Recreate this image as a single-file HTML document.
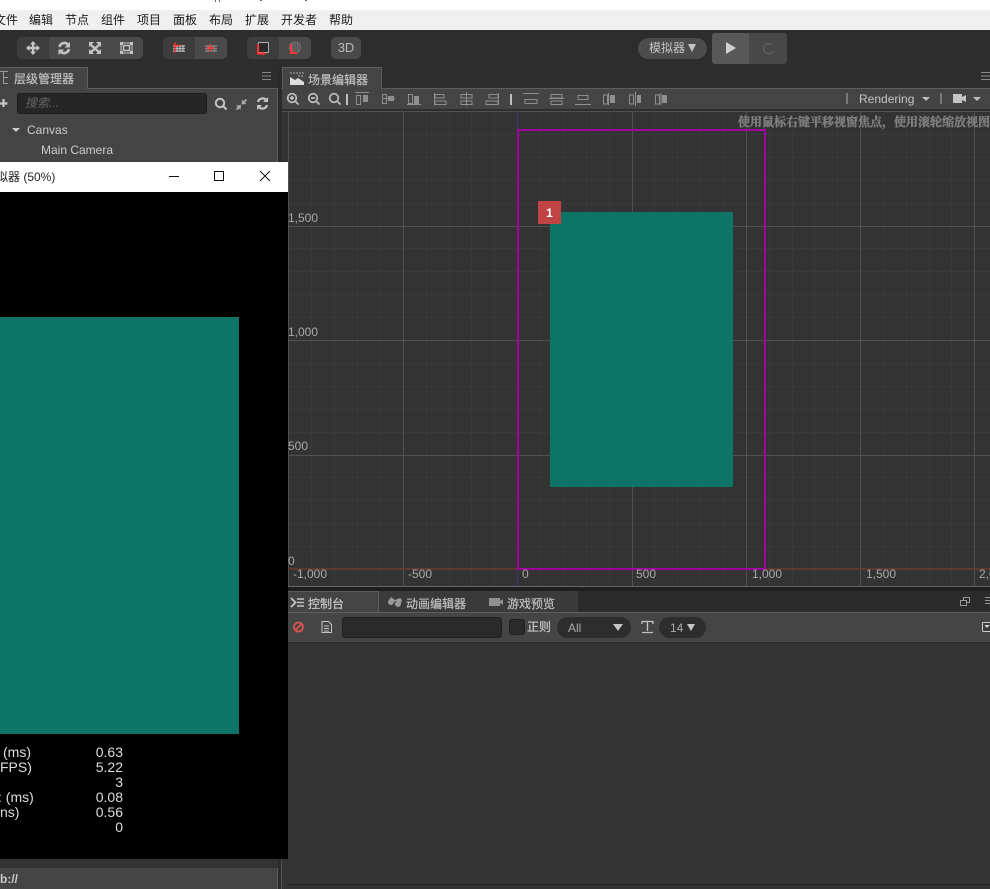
<!DOCTYPE html>
<html><head><meta charset="utf-8">
<style>
html,body{margin:0;padding:0;background:#2d2d2d}
#r{position:relative;width:990px;height:889px;overflow:hidden;background:#2d2d2d;font-family:"Liberation Sans","Noto Sans CJK SC",sans-serif;font-size:12px;color:#ccc}
.a{position:absolute}
.t{position:absolute;white-space:nowrap;line-height:16px}
.b{-webkit-text-stroke:.25px currentColor}
svg{position:absolute;overflow:visible}
.m{position:absolute;top:12px;color:#1a1a1a;font-size:12px;line-height:16px;white-space:nowrap}
.g{fill:none;stroke:#8f8f8f;stroke-width:1}
.f{fill:#8f8f8f}
</style></head><body><div id="r">
<div class="a" style="left:0;top:0;width:990px;height:10px;background:#fff"></div>
<svg style="left:0;top:0" width="400" height="4"><path d="M215 0h1v2h-1zM219 0h1v2h-1zM260 0h2v1h-2zM305 0h2v1h-2z" fill="#666"/></svg>
<div class="a" style="left:0;top:10px;width:990px;height:20px;background:#f0f0f0"></div>
<div class="m" style="left:-6px">文件</div><div class="m" style="left:29px">编辑</div><div class="m" style="left:65px">节点</div><div class="m" style="left:101px">组件</div><div class="m" style="left:137px">项目</div><div class="m" style="left:173px">面板</div><div class="m" style="left:209px">布局</div><div class="m" style="left:245px">扩展</div><div class="m" style="left:281px">开发者</div><div class="m" style="left:329px">帮助</div>

<!-- toolbar -->
<div class="a" style="left:17px;top:37px;width:126px;height:22px;border-radius:5px;background:#4a4a4a;overflow:hidden"><div class="a" style="left:0;top:0;width:32px;height:22px;background:#3d3d3d"></div></div>
<div class="a" style="left:163px;top:37px;width:64px;height:22px;border-radius:5px;background:#4a4a4a;overflow:hidden"><div class="a" style="left:0;top:0;width:32px;height:22px;background:#3d3d3d"></div></div>
<div class="a" style="left:247px;top:37px;width:64px;height:22px;border-radius:5px;background:#4a4a4a;overflow:hidden"><div class="a" style="left:0;top:0;width:32px;height:22px;background:#3d3d3d"></div></div>
<div class="a" style="left:331px;top:37px;width:30px;height:22px;border-radius:5px;background:#4a4a4a;text-align:center;line-height:22px;color:#bbb;font-size:13px">3D</div>
<svg style="left:0;top:0" width="400" height="64">
 <g fill="none" stroke="#c4c4c4" stroke-width="2">
  <path d="M33 42V54M27 48H39" stroke-width="2.400"/><path d="M33 41l-3 3.500h6zM33 55l-3-3.500h6zM26 48l3.500-3v6zM40 48l-3.500-3v6z" fill="#c4c4c4" stroke="none"/>
  <path d="M59.500 47a5 5 0 0 1 8.500-2.500M69 49a5 5 0 0 1-8.500 2.500" stroke-width="2.600"/>
  <path d="M70 42v5.500h-5.500zM58.500 55v-5.500H64z" fill="#c4c4c4" stroke="none"/>
  <path d="M91 45l8 7M99 45l-8 7" stroke-width="2.400"/>
  <path d="M89 42h5l-5 5zM101 42h-5l5 5zM89 54h5l-5-5zM101 54h-5l5-5z" fill="#c4c4c4" stroke="none"/>
  <rect x="121" y="43" width="11" height="10" stroke-width="1"/><rect x="123.500" y="45.500" width="6" height="5" stroke-width="1.500"/>
  <path d="M120 42h3v3h-3zM130 42h3v3h-3zM120 51h3v3h-3zM130 51h3v3h-3z" fill="#c4c4c4" stroke="none"/>
 </g>
 <g stroke="#b5b5b5" stroke-width="1.200" fill="none"><path d="M173 46h12M173 48.500h12M173 51h12M177 45v7M180 45v7M183 45v7"/></g>
 <path d="M175 42.500v10M174 45.500h6" stroke="#f33" stroke-width="1.500" fill="none"/>
 <g stroke="#888" stroke-width="1.200" fill="none"><path d="M205 46h12M205 48.500h12M205 51h12M208 45v7M211 45v7M214 45v7"/></g>
 <path d="M210.500 44v8M207 48h7" stroke="#f33" stroke-width="1.500" fill="none"/>
 <rect x="258.500" y="42.500" width="10" height="10" fill="#2a2a2a" stroke="#aaa"/>
 <path d="M258 44v9.500h6" stroke="#f33" stroke-width="2" fill="none"/><path d="M263 51.500l3 2-3 2z" fill="#f33"/>
 <circle cx="295" cy="47.500" r="5.500" fill="none" stroke="#777"/><path d="M290 45h10M290 48h10M290 50.500h10M292.500 42.500v10M295 42.500v10M297.500 42.500v10" stroke="#777" stroke-width=".7"/>
 <path d="M291 44v9h6" stroke="#f33" stroke-width="2" fill="none"/>
</svg>

<div class="a" style="left:638px;top:38px;width:69px;height:21px;border-radius:11px;background:#4c4c4c;color:#c4c4c4;line-height:21px;padding-left:11px;box-sizing:border-box;font-size:12px">模拟器</div>
<svg style="left:0;top:0" width="800" height="64"><path d="M688 44h8l-4 8z" fill="#c4c4c4"/></svg>
<div class="a" style="left:712px;top:33px;width:75px;height:31px;border-radius:3px;background:#484848;overflow:hidden"><div class="a" style="left:0;top:0;width:37px;height:31px;background:#585858"></div>
<svg style="left:0;top:0" width="75" height="31"><path d="M14 9l10 6-10 6z" fill="#cfcfcf"/><path d="M60 12a5 5 0 1 0 1 6" fill="none" stroke="#5d5d5d" stroke-width="1.500"/></svg></div>

<!-- left panel -->
<div class="a" style="left:0;top:67px;width:278px;height:822px;background:#2d2d2d"></div>
<div class="a" style="left:0;top:88px;width:278px;height:801px;background:#444;box-sizing:border-box;border-top:1px solid #5e5e5e;border-right:1px solid #5e5e5e"></div>
<div class="a" style="left:0;top:67px;width:88px;height:22px;background:#444;box-sizing:border-box;border:1px solid #5e5e5e;border-left:0;border-bottom:0"></div>
<svg style="left:0;top:0" width="290" height="160">
 <path d="M0 71.500h8M3.500 72v12M3 77.500h5M3 83.500h5" stroke="#999" fill="none"/>
 <path d="M262 72.500h9M262 76h9M262 79.500h9" stroke="#8a8a8a" stroke-width="1.100"/>
 <path d="M3.500 99v8M0 103.500h7.500" stroke="#c8c8c8" stroke-width="2.200"/>
 <circle cx="220" cy="103" r="4.200" fill="none" stroke="#c4c4c4" stroke-width="2"/><path d="M223 106l3.500 3.500" stroke="#c4c4c4" stroke-width="2.200"/>
 <path d="M246.500 99.500l-3 3M236.500 109.500l3-3" stroke="#aaa" stroke-width="1.800"/><path d="M241.500 104.500l.5-5 4.500 4.500zM241 105l-.5 5-4.500-4.500z" fill="#aaa"/>
 <path d="M258 102a4.600 4.600 0 0 1 8-2M267 105a4.600 4.600 0 0 1-8 2" fill="none" stroke="#c4c4c4" stroke-width="2.200"/>
 <path d="M268 97v5h-5zM257 110v-5h5z" fill="#c4c4c4"/>
 <path d="M12 128h8l-4 4z" fill="#ccc"/>
</svg>
<div class="t b" style="left:14px;top:71px;color:#bdbdbd;font-size:12px">层级管理器</div>
<div class="a" style="left:17px;top:93px;width:190px;height:21px;border-radius:3px;background:#262626;box-sizing:border-box;border:1px solid #1e1e1e"></div>
<div class="t" style="left:25px;top:95px;color:#666;font-style:italic;font-size:12px">搜索...</div>
<div class="t" style="left:27px;top:122px;color:#ccc;font-size:12px">Canvas</div>
<div class="t" style="left:41px;top:142px;color:#ccc;font-size:12px">Main Camera</div>
<div class="a" style="left:0;top:859px;width:278px;height:9px;background:#333"></div>
<div class="t" style="left:0;top:871px;color:#ccc;font-weight:bold;font-size:12px">b://</div>

<!-- scene panel -->
<div class="a" style="left:278px;top:67px;width:712px;height:822px;background:#2d2d2d"></div>
<div class="a" style="left:278px;top:67px;width:4px;height:822px;background:#2a2a2a"></div>
<div class="a" style="left:281px;top:88px;width:709px;height:1px;background:#5e5e5e"></div>
<div class="a" style="left:282px;top:67px;width:100px;height:22px;background:#444;box-sizing:border-box;border:1px solid #5e5e5e;border-bottom:0"></div>
<div class="t b" style="left:308px;top:72px;color:#bdbdbd;font-size:12px">场景编辑器</div>
<svg style="left:0;top:0" width="990" height="112">
 <path d="M290 72h2v2h-2zM293 72h2v2h-2zM296 72h2v2h-2zM299 72h2v2h-2zM302 72h2v2h-2zM298 75h2v2h-2zM301 75h2v2h-2z" fill="#777"/>
 <path d="M290 85v-8l5 3 3-2 6 4v3z" fill="#ddd"/>
 <path d="M981 72.500h9M981 76h9M981 79.500h9" stroke="#8a8a8a"/>
</svg>
<div class="a" style="left:282px;top:89px;width:708px;height:21px;background:#444"></div>
<div class="a" style="left:282px;top:109px;width:708px;height:2px;background:#2e2e2e"></div>

<svg style="left:0;top:0" width="990" height="112">
 <g fill="none" stroke="#c0c0c0" stroke-width="1.700">
  <circle cx="292" cy="98" r="4.300"/><path d="M295 101l3.500 3.500M290 98h4M292 96v4"/>
  <circle cx="313" cy="98" r="4.300"/><path d="M316 101l3.500 3.500M311 98h4"/>
  <circle cx="334" cy="98" r="4.300"/><path d="M337 101l3.500 3.500"/>
 </g>
 <path d="M347 94v11" stroke="#c0c0c0" stroke-width="2"/><path d="M511 94v11" stroke="#c0c0c0" stroke-width="2"/>
 <g class="g">
  <path d="M355 92.500h14"/><rect x="356.500" y="95.500" width="4" height="9"/>
  <path d="M382 98.500h13"/><rect x="382.500" y="94.500" width="4" height="9"/>
  <path d="M407 104.500h14"/><rect x="408.500" y="94.500" width="4" height="9"/>
  <path d="M434.500 93v12"/><rect x="435" y="94.500" width="9" height="3.500"/><rect x="435" y="101" width="11" height="3.500"/>
  <path d="M466.500 92v14"/><rect x="461" y="94.500" width="11" height="3.500"/><rect x="461" y="101" width="11" height="3.500"/>
  <path d="M498.500 93v12"/><rect x="486" y="101" width="12" height="3.500"/><rect x="489" y="94.500" width="9" height="3.500"/>
  <path d="M523 93.500h16"/><rect x="525" y="99.500" width="12" height="4"/>
  <path d="M549 98.500h15"/><rect x="551" y="94.500" width="11" height="3.500"/><rect x="551" y="101" width="11" height="3.500"/>
  <path d="M575 104.500h16"/><rect x="578" y="95.500" width="10" height="4"/>
  <path d="M608.500 93v12"/><rect x="603.500" y="95" width="4" height="9"/>
  <path d="M635.500 92v14"/><rect x="629.500" y="95" width="4" height="9"/>
  <path d="M661 93v12"/><rect x="655.500" y="95" width="4" height="9"/>
 </g>
 <path d="M363 95h5v7h-5zM388 96h6v5h-6zM414 96h5v8h-5zM610 95h5v8h-5zM637 95h4v8h-4zM662 95h5v8h-5z" fill="#8f8f8f"/>
 <path d="M847 93v11M941 93v11" stroke="#b0b0b0"/>
 <path d="M922 97h8l-4 4zM973 97h8l-4 4z" fill="#bdbdbd"/>
 <path d="M953 94h9v9h-9zM962 97l4-2v7l-4-2z" fill="#c4c4c4"/>
</svg>
<div class="t" style="left:859px;top:91px;color:#c4c4c4;font-size:12px">Rendering</div>

<!-- grid -->
<svg style="left:282px;top:111px;background:#333" width="708" height="476" viewBox="282 111 708 476">
 <g stroke="#393939" stroke-width="1" id="minor">
  <path d="M311.500 111V587M334.500 111V587M357.500 111V587M380.500 111V587M426.500 111V587M449.500 111V587M471.500 111V587M494.500 111V587M540.500 111V587M563.500 111V587M586.500 111V587M609.500 111V587M654.500 111V587M677.500 111V587M700.500 111V587M723.500 111V587M769.500 111V587M792.500 111V587M814.500 111V587M837.500 111V587M883.500 111V587M906.500 111V587M929.500 111V587M951.500 111V587"/>
  <path d="M282 134.500H990M282 157.500H990M282 180.500H990M282 203.500H990M282 248.500H990M282 271.500H990M282 294.500H990M282 317.500H990M282 363.500H990M282 386.500H990M282 409.500H990M282 432.500H990M282 477.500H990M282 500.500H990M282 523.500H990M282 546.500H990"/>
 </g>
 <g stroke="#505050" stroke-width="1">
  <path d="M288.500 111V587M403.500 111V587M632.500 111V587M746.500 111V587M860.500 111V587M974.500 111V587"/>
  <path d="M282 111.500H990M282 226.500H990M282 340.500H990M282 455.500H990"/>
 </g>
 <path d="M517.500 111V587" stroke="#3a3a78"/>
 <path d="M282 569H990" stroke="#5c3a31" stroke-width="2"/>
 <path d="M282 586.500H990" stroke="#666"/>
 <rect x="550" y="212" width="183" height="275" fill="#0e7468"/>
 <rect x="518" y="130" width="247" height="439" fill="none" stroke="#a004a0" stroke-width="2"/>
 <rect x="538" y="201" width="23" height="23" fill="#c04444"/>
</svg>
<div class="t" style="left:538px;top:205px;width:23px;text-align:center;color:#fff;font-weight:bold;font-size:12px">1</div>
<div class="t" style="left:288px;top:210px;color:#aaa;font-size:12px">1,500</div>
<div class="t" style="left:288px;top:324px;color:#aaa;font-size:12px">1,000</div>
<div class="t" style="left:288px;top:438px;color:#aaa;font-size:12px">500</div>
<div class="t" style="left:288px;top:553px;color:#aaa;font-size:12px">0</div>
<div class="t" style="left:293px;top:566px;color:#aaa;font-size:12px">-1,000</div>
<div class="t" style="left:408px;top:566px;color:#aaa;font-size:12px">-500</div>
<div class="t" style="left:522px;top:566px;color:#aaa;font-size:12px">0</div>
<div class="t" style="left:636px;top:566px;color:#aaa;font-size:12px">500</div>
<div class="t" style="left:752px;top:566px;color:#aaa;font-size:12px">1,000</div>
<div class="t" style="left:866px;top:566px;color:#aaa;font-size:12px">1,500</div>
<div class="t" style="left:979px;top:566px;color:#aaa;font-size:12px">2,000</div>
<div class="t" style="left:738px;top:114px;color:#7f7f7f;font-weight:bold;font-size:12px;-webkit-text-stroke:.4px #7f7f7f;font-family:'Liberation Serif','Noto Serif CJK SC',serif">使用鼠标右键平移视窗焦点，使用滚轮缩放视图</div>

<!-- console -->
<div class="a" style="left:282px;top:587px;width:708px;height:4px;background:#1f1f1f"></div>
<div class="a" style="left:282px;top:591px;width:708px;height:21px;background:#2b2b2b"></div>
<div class="a" style="left:282px;top:591px;width:296px;height:21px;background:#3a3a3a"></div>
<div class="a" style="left:282px;top:591px;width:97px;height:22px;background:#444;border-right:1px solid #5e5e5e;border-top:1px solid #5e5e5e;box-sizing:border-box"></div>
<div class="a" style="left:282px;top:612px;width:708px;height:1px;background:#5e5e5e"></div>
<div class="a" style="left:379px;top:612px;width:611px;height:1px;background:#5e5e5e"></div>
<div class="a" style="left:282px;top:613px;width:708px;height:29px;background:#454545"></div>
<div class="a" style="left:282px;top:642px;width:708px;height:1px;background:#2c2c2c"></div>
<div class="a" style="left:282px;top:643px;width:708px;height:246px;background:#333"></div>
<div class="a" style="left:287px;top:884px;width:703px;height:1px;background:#1f1f1f"></div>
<div class="a" style="left:281px;top:859px;width:1px;height:30px;background:#555"></div>
<div class="t b" style="left:308px;top:596px;color:#c4c4c4;font-size:12px">控制台</div>
<div class="t b" style="left:406px;top:596px;color:#bdbdbd;font-size:12px">动画编辑器</div>
<div class="t b" style="left:507px;top:596px;color:#bdbdbd;font-size:12px">游戏预览</div>
<div class="a" style="left:342px;top:617px;width:160px;height:21px;background:#2a2a2a;border-radius:3px;box-sizing:border-box;border:1px solid #1f1f1f"></div>
<div class="a" style="left:509px;top:619px;width:16px;height:16px;background:#2a2a2a;border-radius:3px;box-sizing:border-box;border:1px solid #1f1f1f"></div>
<div class="t b" style="left:527px;top:619px;color:#c4c4c4;font-size:12px">正则</div>
<div class="a" style="left:557px;top:617px;width:74px;height:21px;border-radius:11px;background:#2d2d2d"></div>
<div class="t" style="left:568px;top:620px;color:#aaa;font-size:12px">All</div>
<div class="a" style="left:659px;top:617px;width:47px;height:21px;border-radius:11px;background:#2d2d2d"></div>
<div class="t" style="left:670px;top:620px;color:#aaa;font-size:12px">14</div>
<svg style="left:0;top:580px" width="990" height="70">
 <path d="M291 18l4.500 4.500-4.500 4.500" fill="none" stroke="#c4c4c4" stroke-width="1.800"/>
 <path d="M297 19h7M297 22.500h7M297 26h7" stroke="#c4c4c4" stroke-width="1.500"/>
 <g fill="#999"><circle cx="391" cy="22" r="3"/><circle cx="398" cy="24" r="3"/><path d="M388 22l3-5 4 3 5-2 2 2-1 3-5-2-4 2z"/></g>
 <path d="M489 18h11v8h-11zM500 21l3-2v6l-3-2z" fill="#8f8f8f"/>
 <path d="M960.500 20.500h6v5h-6z M963.500 20v-2.500h6v5h-3" fill="none" stroke="#999"/>
 <path d="M985 17.500h5M985 20.500h5M985 23.500h5" stroke="#999"/>
 <circle cx="298.500" cy="47" r="4.500" fill="none" stroke="#d9534f" stroke-width="1.800"/><path d="M295.500 50l6-6" stroke="#d9534f" stroke-width="1.800"/>
 <path d="M322 41.500h6.500l3 3v8h-9.500zM324 46h5M324 48.500h5M324 51h5" fill="none" stroke="#c4c4c4"/>
 <path d="M613 44h10l-5 7zM687 44h8l-4 7z" fill="#c4c4c4"/>
 <path d="M642 41.500h11M647.500 42v9M642 52.500h11M642 41v3M653 41v3" fill="none" stroke="#c4c4c4" stroke-width="1.300"/>
 <rect x="982.500" y="42.500" width="9" height="9" rx="1" fill="#3a3a3a" stroke="#ccc"/><path d="M984.500 45h5l-2.500 3z" fill="#ddd"/>
</svg>

<!-- simulator window -->
<div class="a" style="left:0;top:162px;width:288px;height:697px;background:#000"></div>
<div class="a" style="left:0;top:162px;width:288px;height:30px;background:#fff"></div>
<div class="t" style="left:-4px;top:169px;color:#222;font-size:12px">拟器 (50%)</div>
<svg style="left:0;top:162px" width="288" height="30">
 <path d="M169 14.500h10" stroke="#111"/>
 <rect x="214.500" y="9.500" width="9" height="9" fill="none" stroke="#111"/>
 <path d="M260 9l10 10M270 9l-10 10" stroke="#111"/>
</svg>
<div class="a" style="left:0;top:317px;width:239px;height:417px;background:#0e7468"></div>
<div class="a" style="left:0;top:745px;width:123px;color:#ddd;font-size:14px;line-height:15px">
 <div style="height:15px;position:relative"><span class="a" style="left:3px">(ms)</span><span class="a" style="right:0">0.63</span></div>
 <div style="height:15px;position:relative"><span class="a" style="left:0">FPS)</span><span class="a" style="right:0">5.22</span></div>
 <div style="height:15px;position:relative"><span class="a" style="right:0">3</span></div>
 <div style="height:15px;position:relative"><span class="a" style="left:-2px">: (ms)</span><span class="a" style="right:0">0.08</span></div>
 <div style="height:15px;position:relative"><span class="a" style="left:0">ns)</span><span class="a" style="right:0">0.56</span></div>
 <div style="height:15px;position:relative"><span class="a" style="right:0">0</span></div>
</div>
</div></body></html>
